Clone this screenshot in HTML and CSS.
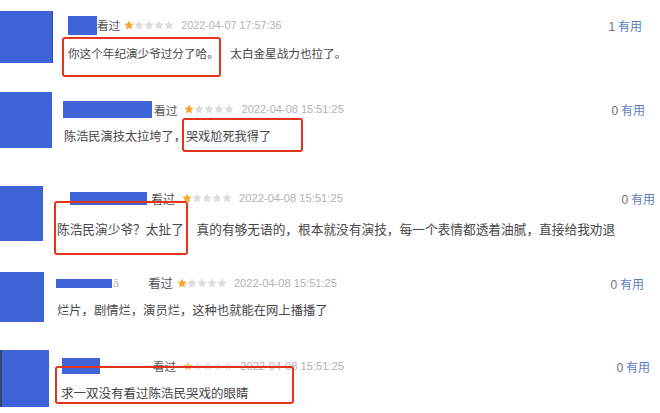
FILE: index.html
```html
<!DOCTYPE html>
<html lang="zh-CN">
<head>
<meta charset="utf-8">
<title>短评</title>
<link rel="stylesheet" href="styles.css">
</head>
<body>
<svg class="defs" width="0" height="0" aria-hidden="true">
  <defs>
    <path id="star" d="M5 0.4 L6.35 3.55 L9.75 3.85 L7.15 6.1 L7.95 9.45 L5 7.7 L2.05 9.45 L2.85 6.1 L0.25 3.85 L3.65 3.55Z"/>
  </defs>
</svg>
<main class="list">
  <section class="row r1">
    <div class="avatar"></div>
    <div class="body">
      <div class="head">
        <span class="name"></span>
        <span class="seen">看过</span>
        <svg class="stars" viewBox="0 0 50 10" width="50" height="10"><use href="#star" x="0" class="on"/><use href="#star" x="10"/><use href="#star" x="20"/><use href="#star" x="30"/><use href="#star" x="40"/></svg>
        <span class="date">2022-04-07 17:57:36</span>
        <span class="useful"><b>1</b> 有用</span>
      </div>
      <p class="text"><span class="mark">你这个年纪演少爷过分了哈。</span>　太白金星战力也拉了。</p>
    </div>
  </section>

  <section class="row r2">
    <div class="avatar"></div>
    <div class="body">
      <div class="head">
        <span class="name"></span>
        <span class="seen">看过</span>
        <svg class="stars" viewBox="0 0 50 10" width="50" height="10"><use href="#star" x="0" class="on"/><use href="#star" x="10"/><use href="#star" x="20"/><use href="#star" x="30"/><use href="#star" x="40"/></svg>
        <span class="date">2022-04-08 15:51:25</span>
        <span class="useful"><b>0</b> 有用</span>
      </div>
      <p class="text">陈浩民演技太拉垮了，<span class="mark">哭戏尬死我得了</span></p>
    </div>
  </section>

  <section class="row r3">
    <div class="avatar"></div>
    <div class="body">
      <div class="head">
        <span class="name"></span>
        <span class="seen">看过</span>
        <svg class="stars" viewBox="0 0 50 10" width="50" height="10"><use href="#star" x="0" class="on"/><use href="#star" x="10"/><use href="#star" x="20"/><use href="#star" x="30"/><use href="#star" x="40"/></svg>
        <span class="date">2022-04-08 15:51:25</span>
        <span class="useful"><b>0</b> 有用</span>
      </div>
      <p class="text"><span class="mark">陈浩民演少爷？太扯了</span>　真的有够无语的，根本就没有演技，每一个表情都透着油腻，直接给我劝退</p>
    </div>
  </section>

  <section class="row r4">
    <div class="avatar"></div>
    <div class="body">
      <div class="head">
        <span class="name"></span><span class="frag">ā</span>
        <span class="seen">看过</span>
        <svg class="stars" viewBox="0 0 50 10" width="50" height="10"><use href="#star" x="0" class="on"/><use href="#star" x="10"/><use href="#star" x="20"/><use href="#star" x="30"/><use href="#star" x="40"/></svg>
        <span class="date">2022-04-08 15:51:25</span>
        <span class="useful"><b>0</b> 有用</span>
      </div>
      <p class="text">烂片，剧情烂，演员烂，这种也就能在网上播播了</p>
    </div>
  </section>

  <section class="row r5">
    <div class="avatar"></div>
    <div class="body">
      <div class="head">
        <span class="name"></span>
        <span class="seen">看过</span>
        <svg class="stars" viewBox="0 0 50 10" width="50" height="10"><use href="#star" x="0" class="on"/><use href="#star" x="10"/><use href="#star" x="20"/><use href="#star" x="30"/><use href="#star" x="40"/></svg>
        <span class="date">2022-04-08 15:51:25</span>
        <span class="useful"><b>0</b> 有用</span>
      </div>
      <p class="text"><span class="mark">求一双没有看过陈浩民哭戏的眼睛</span></p>
    </div>
  </section>
</main>
</body>
</html>
```

FILE: styles.css
```css
* { box-sizing: border-box; }

html, body {
  margin: 0;
  padding: 0;
  background: #fefdff;
}

body {
  width: 660px;
  height: 413px;
  overflow: hidden;
  font-family: "Noto Sans CJK SC", "Liberation Sans", sans-serif;
  color: #444;
}

.defs { position: absolute; }

.list {
  display: flex;
  flex-direction: column;
}

.row {
  display: flex;
  align-items: flex-start;
  height: var(--h);
  overflow: hidden;
}

.avatar {
  flex: none;
  width: var(--aw);
  height: var(--ah);
  margin-top: var(--at);
  background: #3d63d6;
}

.body {
  flex: 1;
  min-width: 0;
  margin-left: var(--bl);
  padding-top: var(--ht);
  padding-right: var(--pr);
}

.head {
  display: flex;
  align-items: center;
  height: 20px;
  white-space: nowrap;
}

.name {
  flex: none;
  width: var(--nw);
  height: var(--nh);
  margin-left: var(--no);
  background: #3e64d8;
}

.frag {
  font-family: "Liberation Sans", sans-serif;
  font-size: 11px;
  color: #bbb;
  margin-left: 1px;
}

.seen {
  margin-left: var(--sg);
  font-size: var(--sf);
  color: #555;
}

.stars {
  flex: none;
  margin-left: var(--stg);
  fill: #dcdcdc;
}

.stars .on { fill: #f6a623; }

.date {
  margin-left: var(--dg);
  font-family: "Liberation Sans", Arial, sans-serif;
  font-size: var(--df);
  color: #b4b4b4;
}

.useful {
  margin-left: auto;
  font-size: 12px;
  color: #5a7fbe;
}

.useful b {
  font-family: "Liberation Sans", Arial, sans-serif;
  font-weight: normal;
  color: #707070;
}

.text {
  margin: var(--tt) 0 0;
  font-size: var(--tf);
  line-height: 18px;
  white-space: nowrap;
  color: #474747;
}

.mark {
  position: relative;
  display: inline-block;
}

.mark::after {
  content: "";
  position: absolute;
  left: var(--ml);
  right: var(--mr);
  top: var(--mt);
  bottom: var(--mb);
  border: 2px solid #e3341e;
  border-radius: 3px;
}

/* row geometry (collage of five screenshot strips) */
.r1 {
  --h: 80px; --aw: 53px; --ah: 52px; --at: 11px;
  --bl: 15px; --ht: 15px; --pr: 18px;
  --nw: 29px; --nh: 19px; --no: 0px;
  --sg: 0px; --sf: 11.6px; --stg: 4px; --dg: 7px; --df: 10.8px;
  --tt: 9px; --tf: 11.6px;
  --ml: -6px; --mr: -2px; --mt: -7px; --mb: -15px;
}
.r1 .avatar { box-shadow: inset -1px 0 0 #2c4cae; }

.r2 {
  --h: 90px; --aw: 52px; --ah: 56px; --at: 12px;
  --bl: 12px; --ht: 19px; --pr: 15px;
  --nw: 89px; --nh: 17px; --no: -1px;
  --sg: 2px; --sf: 11.8px; --stg: 6px; --dg: 8px; --df: 11px;
  --tt: 8px; --tf: 12.2px;
  --ml: -4px; --mr: -32px; --mt: -9px; --mb: -7px;
}

.r3 {
  --h: 90px; --aw: 43px; --ah: 55px; --at: 16px;
  --bl: 14px; --ht: 18px; --pr: 5px;
  --nw: 77px; --nh: 13px; --no: 13px;
  --sg: 4px; --sf: 12px; --stg: 7px; --dg: 7px; --df: 11.2px;
  --tt: 12px; --tf: 12.7px;
  --ml: -3px; --mr: -4px; --mt: -19px; --mb: -17px;
}

.r4 {
  --h: 80px; --aw: 44px; --ah: 50px; --at: 12px;
  --bl: 13px; --ht: 13px; --pr: 16px;
  --nw: 56px; --nh: 9px; --no: -1px;
  --sg: 29px; --sf: 12.4px; --stg: 4px; --dg: 7px; --df: 11.1px;
  --tt: 8px; --tf: 12.3px;
}

.r5 {
  --h: 73px; --aw: 49px; --ah: 57px; --at: 10px;
  --bl: 12px; --ht: 16px; --pr: 10px;
  --nw: 38px; --nh: 16px; --no: 1px;
  --sg: 53px; --sf: 11.6px; --stg: 7px; --dg: 7px; --df: 11.2px;
  --tt: 8px; --tf: 12.5px;
  --ml: -6px; --mr: -45px; --mt: -18px; --mb: -2px;
}
.r5 .avatar { box-shadow: inset 2px 0 0 #33476e; }
.r5 .stars { opacity: 0.6; }
```
